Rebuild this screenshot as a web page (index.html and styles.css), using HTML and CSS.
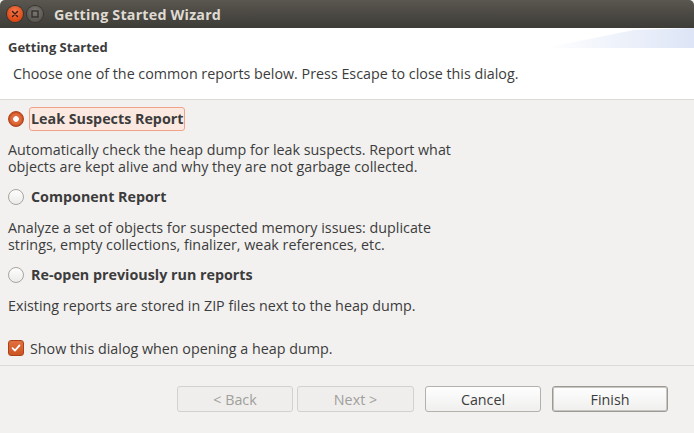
FILE: index.html
```html
<!DOCTYPE html>
<html>
<head>
<meta charset="utf-8">
<link rel="stylesheet" href="styles.css">
</head>
<body>
<div class="window">
  <div class="titlebar">
    <div class="wbtns">
      <span class="wbtn close"><svg width="16" height="16" viewBox="0 0 16 16"><path d="M5.5 5.5 L10.5 10.5 M10.5 5.5 L5.5 10.5" stroke="#3a1a10" stroke-width="1.4" stroke-linecap="round"/></svg></span>
      <span class="wbtn max"><svg width="16" height="16" viewBox="0 0 16 16"><rect x="5" y="5" width="6" height="6" fill="none" stroke="#2e2d2a" stroke-width="1.3"/></svg></span>
    </div>
    <div class="wtitle">Getting Started Wizard</div>
  </div>
  <div class="header">
    <div class="htitle">Getting Started</div>
    <div class="hdesc">Choose one of the common reports below. Press Escape to close this dialog.</div>
  </div>
  <div class="content">
    <div class="option">
      <span class="radio checked"></span>
      <span class="olabel focused">Leak Suspects Report</span>
    </div>
    <p class="odesc">Automatically check the heap dump for leak suspects. Report what<br>objects are kept alive and why they are not garbage collected.</p>
    <div class="option">
      <span class="radio"></span>
      <span class="olabel">Component Report</span>
    </div>
    <p class="odesc">Analyze a set of objects for suspected memory issues: duplicate<br>strings, empty collections, finalizer, weak references, etc.</p>
    <div class="option">
      <span class="radio"></span>
      <span class="olabel">Re-open previously run reports</span>
    </div>
    <p class="odesc">Existing reports are stored in ZIP files next to the heap dump.</p>
    <div class="check">
      <span class="cbox"><svg width="16" height="16" viewBox="0 0 16 16"><path d="M4 8.2 L6.8 11 L12 5" fill="none" stroke="#fff" stroke-width="2" stroke-linecap="round" stroke-linejoin="round"/></svg></span>
      <span class="clabel">Show this dialog when opening a heap dump.</span>
    </div>
  </div>
  <div class="footer">
    <button class="btn disabled b-back">&lt; Back</button>
    <button class="btn disabled b-next">Next &gt;</button>
    <button class="btn b-cancel">Cancel</button>
    <button class="btn default b-finish">Finish</button>
  </div>
</div>
</body>
</html>
```

FILE: styles.css
```css
* { box-sizing: border-box; }
html, body { margin: 0; padding: 0; }
body {
  width: 694px;
  height: 433px;
  overflow: hidden;
  background: #f2f1f0;
  font-family: "Open Sans", "DejaVu Sans", sans-serif;
  font-size: 14.3px;
  color: #3c3c3c;
}
.window {
  width: 694px;
  height: 433px;
  display: flex;
  flex-direction: column;
  background: #f2f1f0;
}
.titlebar {
  height: 28px;
  flex: none;
  display: flex;
  align-items: center;
  background: linear-gradient(#5a5650, #3d3c37);
  border-radius: 5px 5px 0 0;
  padding-left: 7px;
}
.wbtns { display: flex; gap: 4px; }
.wbtn {
  width: 16px;
  height: 16px;
  border-radius: 50%;
  display: block;
}
.wbtn svg { display: block; }
.close {
  background: radial-gradient(circle at 50% 35%, #f37a4e, #dd4814 70%);
  box-shadow: 0 0 0 1px #38352f;
}
.max {
  background: radial-gradient(circle at 50% 35%, #7b7872, #5b5853 70%);
  box-shadow: 0 0 0 1px #38352f;
}
.wtitle {
  margin-left: 11px;
  color: #dfdbd2;
  font-weight: bold;
  font-size: 14.3px;
  letter-spacing: 0.2px;
}
.header {
  height: 72px;
  flex: none;
  background: #fff;
  position: relative;
  border-bottom: 1px solid #dcdad5;
  padding: 10px 0 0 8px;
}
.header::before {
  content: "";
  position: absolute;
  top: 0;
  right: 0;
  width: 150px;
  height: 20px;
  background: linear-gradient(90deg, rgba(220,228,246,0), #dde5f6);
  clip-path: polygon(0 100%, 60% 10%, 100% 0, 100% 100%);
}
.htitle {
  font-weight: bold;
  font-size: 13px;
  height: 18px;
  line-height: 18px;
}
.hdesc {
  margin-top: 9px;
  padding-left: 5px;
  line-height: 18px;
}
.content {
  flex: 1;
  padding: 7px 0 0 8px;
  border-bottom: 1px solid #dcdad5;
}
.option {
  display: flex;
  align-items: center;
  height: 24px;
}
.radio {
  width: 16px;
  height: 16px;
  border-radius: 50%;
  border: 1px solid #a8a59f;
  background: linear-gradient(#fdfdfd, #ecebea);
  flex: none;
  margin-right: 5px;
}
.radio.checked {
  border: 1px solid #b0421c;
  background: radial-gradient(circle, #fff 0 2.5px, #e06a3c 3.2px 5px, #c9531f 6.5px);
}
.olabel {
  font-weight: bold;
  height: 24px;
  line-height: 22px;
  padding: 0 1px 0 1px;
  border: 1px solid transparent;
  border-radius: 3px;
}
.olabel.focused {
  background: #fbe9e1;
  border-color: #f1a38a;
}
.odesc {
  margin: 10px 0 10px 0;
  line-height: 17px;
}
.check {
  display: flex;
  align-items: center;
  height: 22px;
  margin-top: 23px;
}
.cbox {
  width: 16px;
  height: 16px;
  border-radius: 3px;
  background: linear-gradient(#e36f3e, #cc5522);
  border: 1px solid #a9431c;
  margin-right: 6px;
  flex: none;
  display: flex;
  align-items: center;
  justify-content: center;
}
.cbox svg { display: block; }
.footer {
  height: 67px;
  flex: none;
  display: flex;
  align-items: flex-start;
  padding: 20px 0 0 177px;
}
.btn {
  height: 26px;
  font-family: inherit;
  font-size: 14.3px;
  color: #3c3c3c;
  border-radius: 3px;
  border: 1px solid #b4b1ac;
  background: linear-gradient(#fefefe, #f0efee);
  padding: 0;
}
.btn.disabled {
  color: #a09e9a;
  border-color: #d3d1cd;
  background: #efeeed;
}
.b-back { width: 116px; }
.b-next { width: 117px; margin-left: 4px; }
.b-cancel { width: 116px; margin-left: 11px; }
.b-finish { width: 116px; margin-left: 11px; }
.btn.default {
  border-color: #9c9994;
  box-shadow: inset 0 0 0 1px #c9c7c2;
}
```
